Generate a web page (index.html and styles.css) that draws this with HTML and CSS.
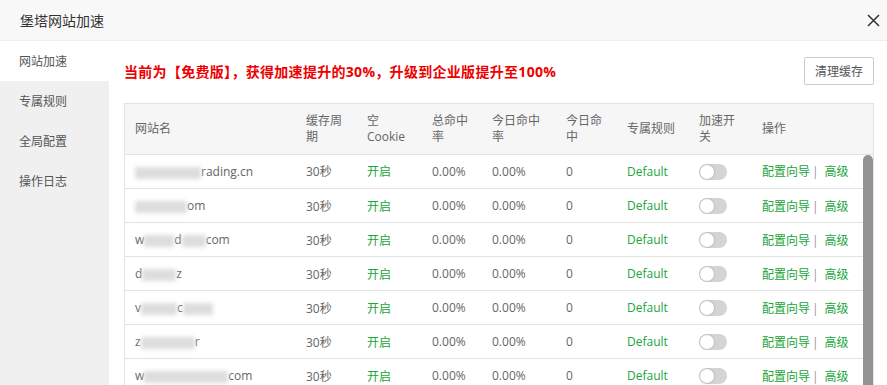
FILE: index.html
```html
<!DOCTYPE html>
<html lang="zh-CN">
<head>
  <meta charset="UTF-8" />
  <title>堡塔网站加速</title>
  <link rel="stylesheet" href="styles.css">
</head>
<body>
  <div class="dialog">
    <div class="dialog-title">
      <span>堡塔网站加速</span>
      <span class="close">
        <svg width="13" height="13" viewBox="0 0 13 13"><path d="M1 1L12 12M12 1L1 12" stroke="#333" stroke-width="1.5" fill="none"/></svg>
      </span>
    </div>

    <div class="dialog-body">
      <ul class="side-menu">
        <li class="active">网站加速</li>
        <li>专属规则</li>
        <li>全局配置</li>
        <li>操作日志</li>
      </ul>

      <div class="main">
        <div class="top-bar">
          <span class="notice">当前为【免费版】，获得加速提升的30%，升级到企业版提升至100%</span>
          <button class="btn">清理缓存</button>
        </div>

        <div class="table-box">
          <table class="head-table">
            <colgroup>
              <col style="width:171px"><col style="width:61px"><col style="width:65px"><col style="width:60px"><col style="width:74px"><col style="width:61px"><col style="width:72px"><col style="width:63px"><col>
            </colgroup>
            <thead>
              <tr>
                <th>网站名</th>
                <th>缓存周期</th>
                <th>空 Cookie</th>
                <th>总命中率</th>
                <th>今日命中率</th>
                <th>今日命中</th>
                <th>专属规则</th>
                <th>加速开关</th>
                <th>操作</th>
              </tr>
            </thead>
          </table>

          <div class="body-wrap">
            <table class="body-table">
              <colgroup>
                <col style="width:171px"><col style="width:61px"><col style="width:65px"><col style="width:60px"><col style="width:74px"><col style="width:61px"><col style="width:72px"><col style="width:63px"><col>
              </colgroup>
              <tbody id="site-list"></tbody>
            </table>
            <div class="scrollbar"><div class="thumb"></div></div>
          </div>
        </div>
      </div>
    </div>
  </div>

  <script>
    // 网站名已打码，这里用灰块代替
    const sites = [
      [["m", 66], ["t", "rading.cn"]],
      [["m", 52], ["t", "om"]],
      [["t", "w"], ["m", 30], ["t", "d"], ["m", 24], ["t", "com"]],
      [["t", "d"], ["m", 34], ["t", "z"]],
      [["t", "v"], ["m", 36], ["t", "c"], ["m", 30]],
      [["t", "z"], ["m", 54], ["t", "r"]],
      [["t", "w"], ["m", 84], ["t", "com"]],
      [["t", "b"], ["m", 60], ["t", "net"]]
    ];

    const tbody = document.getElementById("site-list");
    sites.forEach(parts => {
      const name = parts.map(p => p[0] === "m"
        ? `<span class="mask" style="width:${p[1]}px"></span>`
        : p[1]).join("");
      const row = document.createElement("tr");
      row.innerHTML = `
        <td class="name">${name}</td>
        <td>30秒</td>
        <td class="green">开启</td>
        <td>0.00%</td>
        <td>0.00%</td>
        <td>0</td>
        <td class="green">Default</td>
        <td><span class="switch"></span></td>
        <td><a class="link">配置向导</a><span class="sep">|</span><a class="link">高级</a></td>
      `;
      tbody.appendChild(row);
    });
  </script>
</body>
</html>
```

FILE: styles.css
```css
* {
  box-sizing: border-box;
}

html, body {
  margin: 0;
  padding: 0;
  overflow: hidden;
}

body {
  font-family: "Open Sans", "Noto Sans CJK SC", sans-serif;
  font-size: 12px;
  color: #666;
  background: #fff;
}

.dialog {
  width: 887px;
  height: 385px;
  display: flex;
  flex-direction: column;
}

.dialog-title {
  height: 41px;
  flex: none;
  padding: 0 7px 0 20px;
  background: #f8f8f8;
  border-bottom: 1px solid #eee;
  display: flex;
  align-items: center;
  justify-content: space-between;
  font-size: 14px;
  color: #333;
}

.close {
  display: flex;
  width: 13px;
  height: 13px;
}

.dialog-body {
  flex: 1;
  display: flex;
  min-height: 0;
}

.side-menu {
  list-style: none;
  margin: 0;
  padding: 0;
  width: 109px;
  flex: none;
  background: #f0f0f0;
}

.side-menu li {
  height: 40px;
  line-height: 41px;
  padding-left: 19px;
  color: #555;
  font-size: 12px;
}

.side-menu li.active {
  background: #fff;
}

.main {
  flex: 1;
  padding: 16px 13px 0 15px;
  min-width: 0;
}

.top-bar {
  display: flex;
  align-items: center;
  justify-content: space-between;
  height: 28px;
}

.notice {
  color: #e00;
  font-size: 14px;
  font-weight: bold;
  letter-spacing: 0.3px;
}

.btn {
  height: 28px;
  padding: 0 10px;
  border: 1px solid #ccc;
  border-radius: 2px;
  background: #fff;
  color: #555;
  font-family: inherit;
  font-size: 12px;
}

.table-box {
  margin-top: 18px;
  width: 750px;
  border: 1px solid #e2e2e2;
  border-bottom: none;
}

table {
  border-collapse: collapse;
  table-layout: fixed;
}

.head-table {
  width: 748px;
  background: #f6f6f6;
}

th {
  height: 50px;
  padding: 0 10px;
  text-align: left;
  font-weight: normal;
  line-height: 16px;
  color: #666;
  border-bottom: 1px solid #e2e2e2;
}

.body-wrap {
  display: flex;
  height: 300px;
  overflow: hidden;
}

.body-table {
  width: 738px;
  flex: none;
  align-self: flex-start;
}

.scrollbar {
  width: 10px;
  flex: none;
  background: #fff;
}

.thumb {
  height: 265px;
  background: #939393;
  border-radius: 5px;
}

td {
  height: 34px;
  padding: 0 10px;
  border-bottom: 1px solid #e2e2e2;
  white-space: nowrap;
  overflow: hidden;
}

td.name {
  color: #666;
}

.mask {
  display: inline-block;
  height: 12px;
  vertical-align: middle;
  background: #ddd;
  filter: blur(2px);
}

.green {
  color: #20a53a;
}

.switch {
  display: inline-block;
  position: relative;
  width: 28px;
  height: 16px;
  border-radius: 8px;
  background: #d4d4d4;
  vertical-align: middle;
}

.switch::after {
  content: "";
  position: absolute;
  left: 1px;
  top: 1px;
  width: 14px;
  height: 14px;
  border-radius: 50%;
  background: #fff;
  box-shadow: 0 0 2px rgba(0, 0, 0, 0.3);
}

.link {
  color: #20a53a;
}

.sep {
  color: #999;
  margin: 0 6px 0 2px;
}
```
